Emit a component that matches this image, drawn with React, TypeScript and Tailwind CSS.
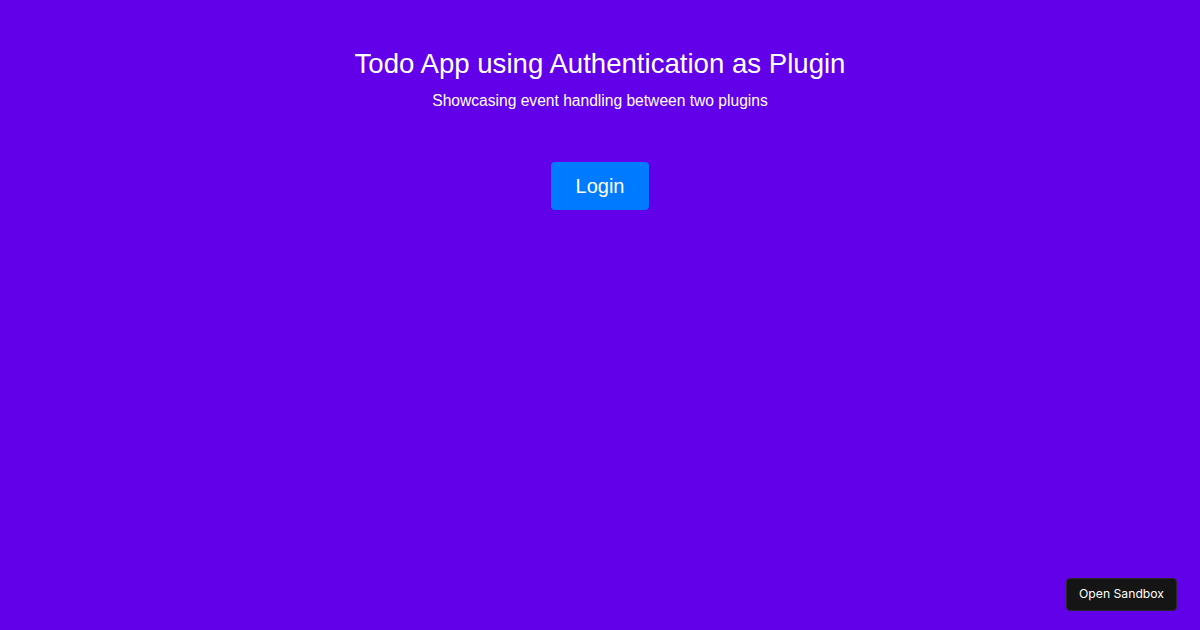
export default function App() {
  return (
    <div className="relative h-[630px] w-[1200px] overflow-hidden bg-[#6200ea] text-white" style={{ fontFamily: '"Liberation Sans", Arial, sans-serif' }}>
      <div className="flex flex-col items-center pt-[45px]">
        <h1 className="text-[27.6px] leading-[38px]">Todo App using Authentication as Plugin</h1>
        <p className="mt-[8px] text-[15.6px] leading-[20px]">Showcasing event handling between two plugins</p>
        <button className="mt-[51px] h-[48px] w-[98px] rounded-[4px] bg-[#007bff] text-[20px] text-white">Login</button>
      </div>
      <div className="absolute left-[1066px] top-[578px] flex h-[33px] w-[111px] items-center justify-center rounded-[4px] border border-[#2a2a2a] bg-[#151515] text-[12.2px] text-white" style={{ fontFamily: 'Inter, sans-serif' }}>
        Open Sandbox
      </div>
    </div>
  );
}
